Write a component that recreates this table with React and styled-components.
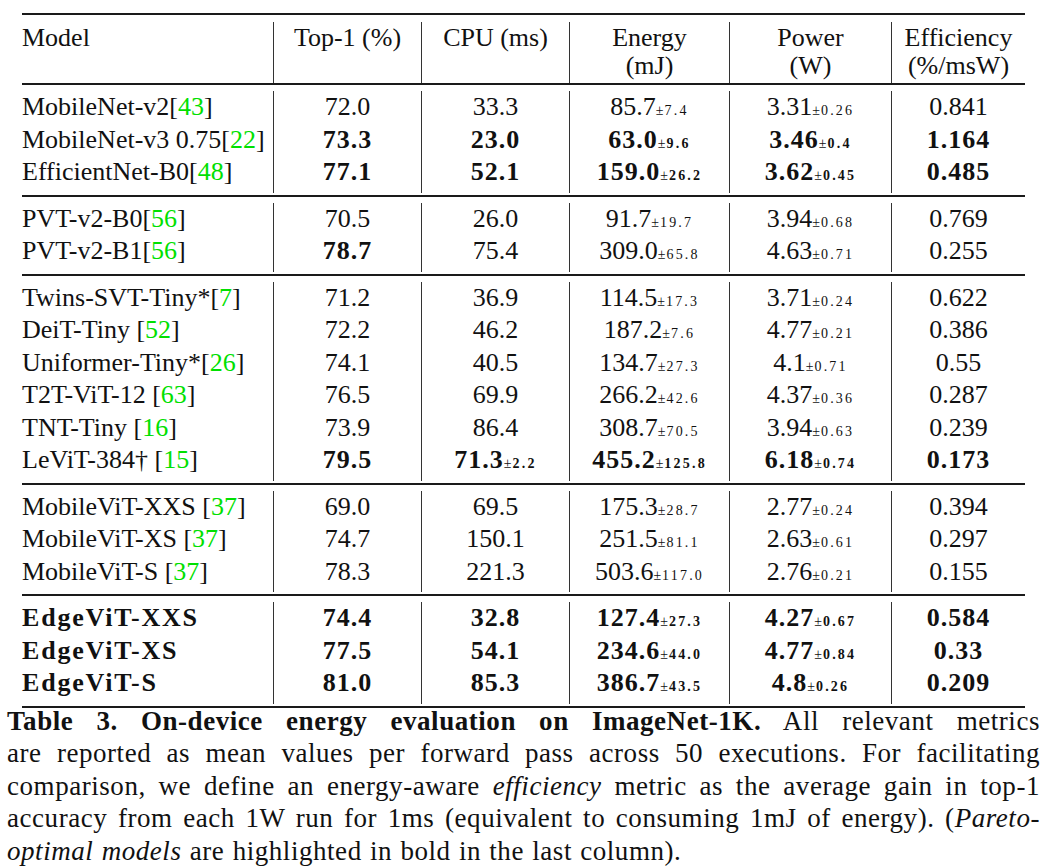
import React from 'react';
import styled, { createGlobalStyle } from 'styled-components';

const GlobalStyle = createGlobalStyle`
  body {
    margin: 0;
    background: #fff;
    color: #111;
    font-family: "Liberation Serif", "Times New Roman", serif;
  }
`;

const COLS = '251px 148px 148px 160px 162px 134px';

const Page = styled.div`
  width: 1042px;
  height: 868px;
  padding-top: 13px;
  box-sizing: border-box;
  overflow: hidden;
`;

const Table = styled.div`
  margin-left: 22px;
  width: 1003px;
  font-size: 26px;
`;

const Rule = styled.div`
  height: 2px;
  background: #1a1a1a;
`;

const Group = styled.div`
  padding: ${p => (p.head ? '7px 0 0' : '6px 0')};
`;

const Row = styled.div`
  display: grid;
  grid-template-columns: ${COLS};
  height: ${p => (p.head ? '61px' : '32.5px')};
  line-height: ${p => (p.head ? '28px' : '32.5px')};
  font-weight: ${p => (p.bold ? 700 : 400)};
  letter-spacing: ${p => (p.bold ? '1.8px' : '0')};
`;

const Cell = styled.div`
  white-space: nowrap;
  text-align: ${p => (p.first ? 'left' : 'center')};
  border-left: ${p => (p.first ? 'none' : '1px solid #333')};
  padding-top: ${p => (p.head ? '2px' : '0')};
  font-weight: ${p => (p.b ? 700 : 'inherit')};
  letter-spacing: ${p => (p.b ? '1px' : 'inherit')};
`;

const Green = styled.span`
  color: #00e000;
`;

const Sub = styled.span`
  font-size: 14px;
  letter-spacing: 2.2px;
  font-weight: ${p => (p.b ? 700 : 400)};
`;

const Pm = styled.span`
  font-weight: 400;
  letter-spacing: 1px;
`;

const Caption = styled.div`
  margin: -3px 0 0 7px;
  width: 1033px;
  font-size: 27px;
  line-height: 32.5px;
  letter-spacing: 0.55px;
  word-spacing: 1px;
`;

const CapLine = styled.div`
  white-space: nowrap;
  text-align: justify;
  text-align-last: ${p => (p.last ? 'left' : 'justify')};
`;

const Strong = styled.b`
  font-weight: 700;
`;

const Cite = ({ n, space }) => (
  <>
    {space ? ' ' : ''}[<Green>{n}</Green>]
  </>
);

// each value: [text, sub, bold]
const groups = [
  [
    { name: <>MobileNet-v2<Cite n="43" /></>, v: [['72.0'], ['33.3'], ['85.7', '7.4'], ['3.31', '0.26'], ['0.841']] },
    { name: <>MobileNet-v3 0.75<Cite n="22" /></>, v: [['73.3', null, 1], ['23.0', null, 1], ['63.0', '9.6', 1], ['3.46', '0.4', 1], ['1.164', null, 1]] },
    { name: <>EfficientNet-B0<Cite n="48" /></>, v: [['77.1', null, 1], ['52.1', null, 1], ['159.0', '26.2', 1], ['3.62', '0.45', 1], ['0.485', null, 1]] },
  ],
  [
    { name: <>PVT-v2-B0<Cite n="56" /></>, v: [['70.5'], ['26.0'], ['91.7', '19.7'], ['3.94', '0.68'], ['0.769']] },
    { name: <>PVT-v2-B1<Cite n="56" /></>, v: [['78.7', null, 1], ['75.4'], ['309.0', '65.8'], ['4.63', '0.71'], ['0.255']] },
  ],
  [
    { name: <>Twins-SVT-Tiny*<Cite n="7" /></>, v: [['71.2'], ['36.9'], ['114.5', '17.3'], ['3.71', '0.24'], ['0.622']] },
    { name: <>DeiT-Tiny<Cite n="52" space /></>, v: [['72.2'], ['46.2'], ['187.2', '7.6'], ['4.77', '0.21'], ['0.386']] },
    { name: <>Uniformer-Tiny*<Cite n="26" /></>, v: [['74.1'], ['40.5'], ['134.7', '27.3'], ['4.1', '0.71'], ['0.55']] },
    { name: <>T2T-ViT-12<Cite n="63" space /></>, v: [['76.5'], ['69.9'], ['266.2', '42.6'], ['4.37', '0.36'], ['0.287']] },
    { name: <>TNT-Tiny<Cite n="16" space /></>, v: [['73.9'], ['86.4'], ['308.7', '70.5'], ['3.94', '0.63'], ['0.239']] },
    { name: <>LeViT-384†<Cite n="15" space /></>, v: [['79.5', null, 1], ['71.3', '2.2', 1], ['455.2', '125.8', 1], ['6.18', '0.74', 1], ['0.173', null, 1]] },
  ],
  [
    { name: <>MobileViT-XXS<Cite n="37" space /></>, v: [['69.0'], ['69.5'], ['175.3', '28.7'], ['2.77', '0.24'], ['0.394']] },
    { name: <>MobileViT-XS<Cite n="37" space /></>, v: [['74.7'], ['150.1'], ['251.5', '81.1'], ['2.63', '0.61'], ['0.297']] },
    { name: <>MobileViT-S<Cite n="37" space /></>, v: [['78.3'], ['221.3'], ['503.6', '117.0'], ['2.76', '0.21'], ['0.155']] },
  ],
  [
    { bold: true, name: 'EdgeViT-XXS', v: [['74.4', null, 1], ['32.8', null, 1], ['127.4', '27.3', 1], ['4.27', '0.67', 1], ['0.584', null, 1]] },
    { bold: true, name: 'EdgeViT-XS', v: [['77.5', null, 1], ['54.1', null, 1], ['234.6', '44.0', 1], ['4.77', '0.84', 1], ['0.33', null, 1]] },
    { bold: true, name: 'EdgeViT-S', v: [['81.0', null, 1], ['85.3', null, 1], ['386.7', '43.5', 1], ['4.8', '0.26', 1], ['0.209', null, 1]] },
  ],
];

const headers = [
  ['Model'],
  ['Top-1 (%)'],
  ['CPU (ms)'],
  ['Energy', '(mJ)'],
  ['Power', '(W)'],
  ['Efficiency', '(%/msW)'],
];

export default function App() {
  return (
    <Page>
      <GlobalStyle />
      <Table>
        <Rule />
        <Group head>
          <Row head>
            {headers.map((h, i) => (
              <Cell key={i} head first={i === 0}>
                {h[0]}
                {h[1] && <br />}
                {h[1]}
              </Cell>
            ))}
          </Row>
        </Group>
        {groups.map((g, gi) => (
          <React.Fragment key={gi}>
            <Rule />
            <Group>
              {g.map((r, ri) => (
                <Row key={ri} bold={r.bold}>
                  <Cell first>{r.name}</Cell>
                  {r.v.map(([val, sub, b], ci) => (
                    <Cell key={ci} b={b}>
                      {val}
                      {sub && (
                        <Sub b={b}>
                          <Pm>±</Pm>
                          {sub}
                        </Sub>
                      )}
                    </Cell>
                  ))}
                </Row>
              ))}
            </Group>
          </React.Fragment>
        ))}
        <Rule />
      </Table>
      <Caption>
        <CapLine>
          <Strong>Table 3. On-device energy evaluation on ImageNet-1K.</Strong> All relevant metrics
        </CapLine>
        <CapLine>are reported as mean values per forward pass across 50 executions. For facilitating</CapLine>
        <CapLine>
          comparison, we define an energy-aware <i>efficiency</i> metric as the average gain in top-1
        </CapLine>
        <CapLine>
          accuracy from each 1W run for 1ms (equivalent to consuming 1mJ of energy). (<i>Pareto-</i>
        </CapLine>
        <CapLine last>
          <i>optimal models</i> are highlighted in bold in the last column).
        </CapLine>
      </Caption>
    </Page>
  );
}
